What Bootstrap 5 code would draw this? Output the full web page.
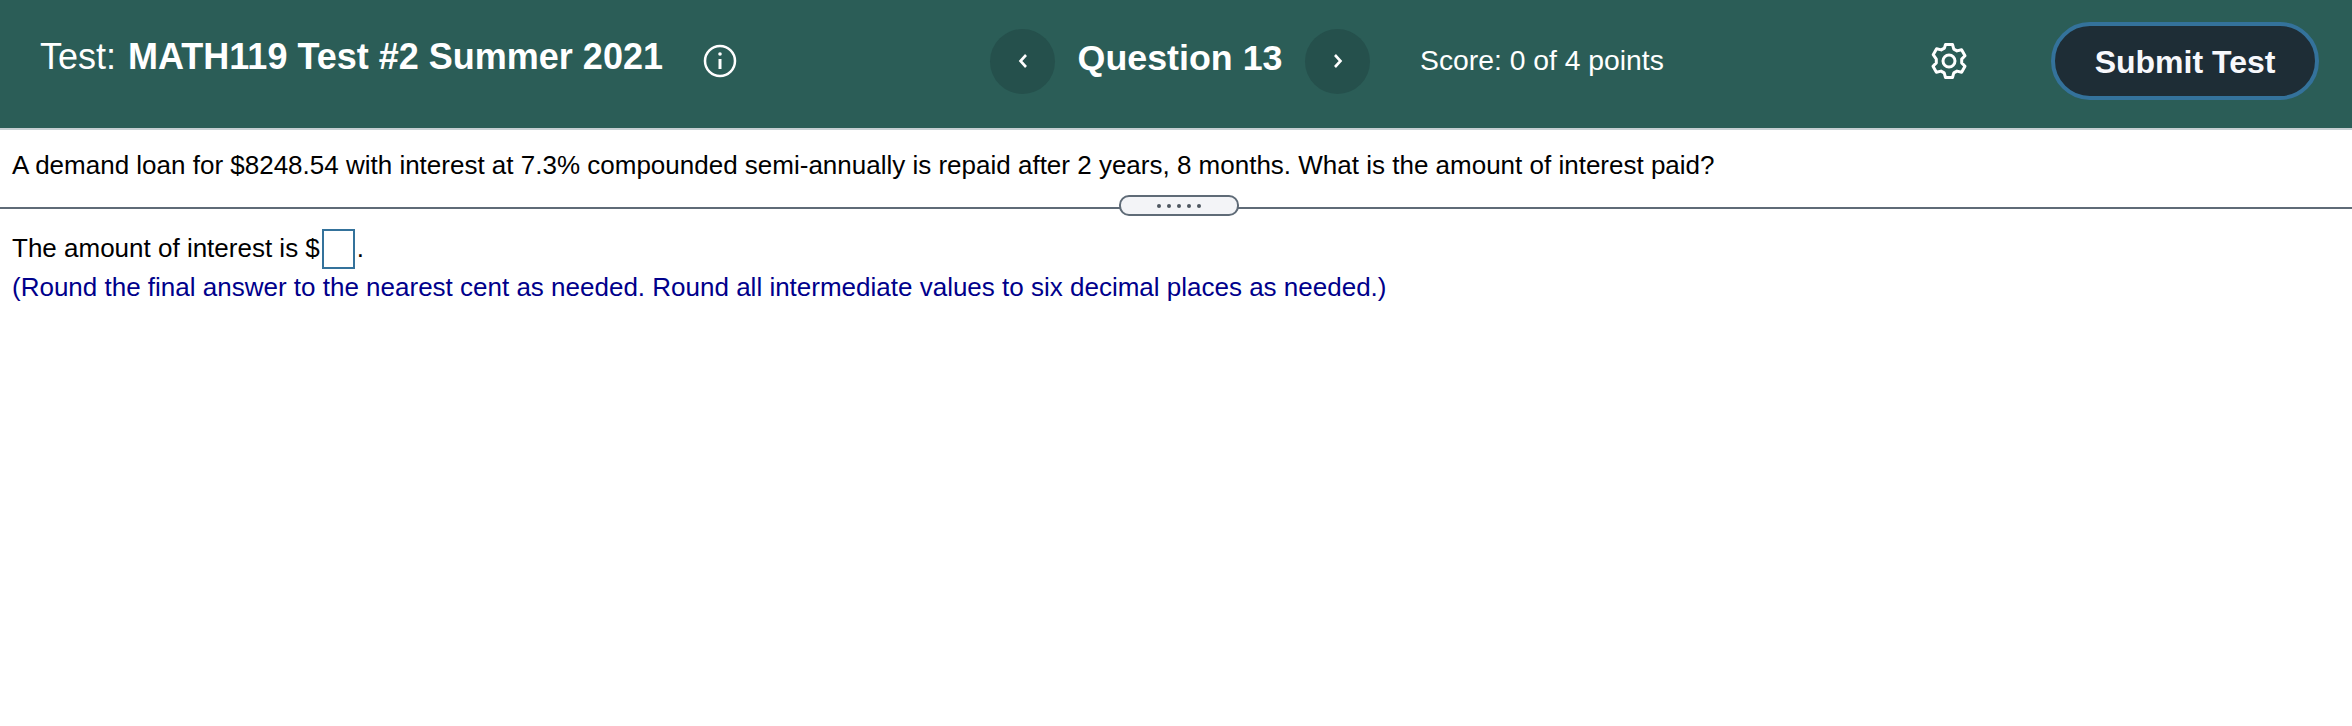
<!DOCTYPE html>
<html lang="en"><head><meta charset="utf-8"><title>Test</title>
<link href="https://cdn.jsdelivr.net/npm/bootstrap@5.3.0/dist/css/bootstrap.min.css" rel="stylesheet">
<style>
html,body{height:100%;}
body{font-family:"Liberation Sans",Arial,sans-serif;color:#000;background:#fff;overflow:hidden;}
.topbar{height:130px;background:#2b5d57;border-bottom:2px solid #c6ced2;color:#fff;padding-left:40px;padding-bottom:6px;}
.lbl{font-size:36px;margin-bottom:8px;}
.ttl{font-size:36px;font-weight:700;margin-left:12px;margin-bottom:8px;width:535px;white-space:nowrap;}
.infoi{margin-left:40px;margin-right:253px;display:block;}
.roundb{width:65px;height:65px;border-radius:50%;border:0;background:#25504c;padding:0;}
.qnum{font-size:35.8px;font-weight:700;width:250px;text-align:center;white-space:nowrap;margin-bottom:4px;}
.scorex{font-size:28.3px;margin-left:50px;width:511px;white-space:nowrap;margin-bottom:2px;}
.submitb{width:268px;height:78px;border-radius:39px;border:4px solid #34729b;background:#1e2d36;color:#f7f8fc;font-size:32px;font-weight:700;padding:2px 0 0;margin-left:84px;}
.stem{font-size:26px;padding:0 12px 6px;height:77px;white-space:nowrap;}
.divline{height:2px;background:#5f6b77;position:relative;}
.grip{position:absolute;left:1119px;top:-12px;width:120px;height:21px;border:2px solid #5f6b77;border-radius:10px;background:#f3f4f7;gap:6px;}
.grip i{width:4px;height:4px;border-radius:50%;background:#4e5760;display:block;}
.answer{padding:20px 12px 0;font-size:26px;line-height:37px;white-space:nowrap;}
.ansbox{display:inline-block;width:33px;height:40px;border:2px solid #34729b;vertical-align:-12px;margin:0 2px;}
.hintx{color:#00008b;}
</style></head><body>
<header class="topbar d-flex align-items-center">
<span class="lbl">Test:</span><span class="ttl">MATH119 Test #2 Summer 2021</span>
<svg class="infoi" width="34" height="34" viewBox="0 0 34 34" fill="none" stroke="#fff" stroke-width="2.5"><circle cx="17" cy="17" r="15"/><path d="M17 15v10" stroke-width="3"/><circle cx="17" cy="10" r="1.8" fill="#fff" stroke="none"/></svg>
<button class="roundb d-flex align-items-center justify-content-center" aria-label="Previous"><svg width="12" height="18" viewBox="0 0 12 18" fill="none" stroke="#fff" stroke-width="2.6"><path d="M9 3 3.5 9 9 15"/></svg></button>
<span class="qnum">Question 13</span>
<button class="roundb d-flex align-items-center justify-content-center" aria-label="Next"><svg width="12" height="18" viewBox="0 0 12 18" fill="none" stroke="#fff" stroke-width="2.6"><path d="M3 3 8.500 9 3 15"/></svg></button>
<span class="scorex">Score: 0 of 4 points</span>
<svg width="36" height="38" viewBox="0 0 36 38" fill="none" stroke="#fff" stroke-width="3" stroke-linejoin="round"><circle cx="18" cy="19" r="6"/><path d="M14.500 2.500h7l1.300 4.600 3.200 1.800 4.600-1.200 3.400 6-3.300 3.400v3.800l3.300 3.400-3.400 6-4.600-1.200-3.200 1.800-1.300 4.600h-7l-1.300-4.600-3.200-1.800-4.600 1.200-3.400-6 3.300-3.400v-3.800L2.200 12.700l3.400-6 4.600 1.200 3.200-1.800z"/></svg>
<button class="submitb">Submit Test</button>
</header>
<div class="stem d-flex align-items-center">A demand loan for $8248.54 with interest at 7.3% compounded semi-annually is repaid after 2 years, 8 months. What is the amount of interest paid?</div>
<div class="divline"><div class="grip d-flex align-items-center justify-content-center"><i></i><i></i><i></i><i></i><i></i></div></div>
<div class="answer">The amount of interest is $<span class="ansbox"></span>.<br><span class="hintx">(Round the final answer to the nearest cent as needed. Round all intermediate values to six decimal places as needed.)</span></div>
</body></html>
